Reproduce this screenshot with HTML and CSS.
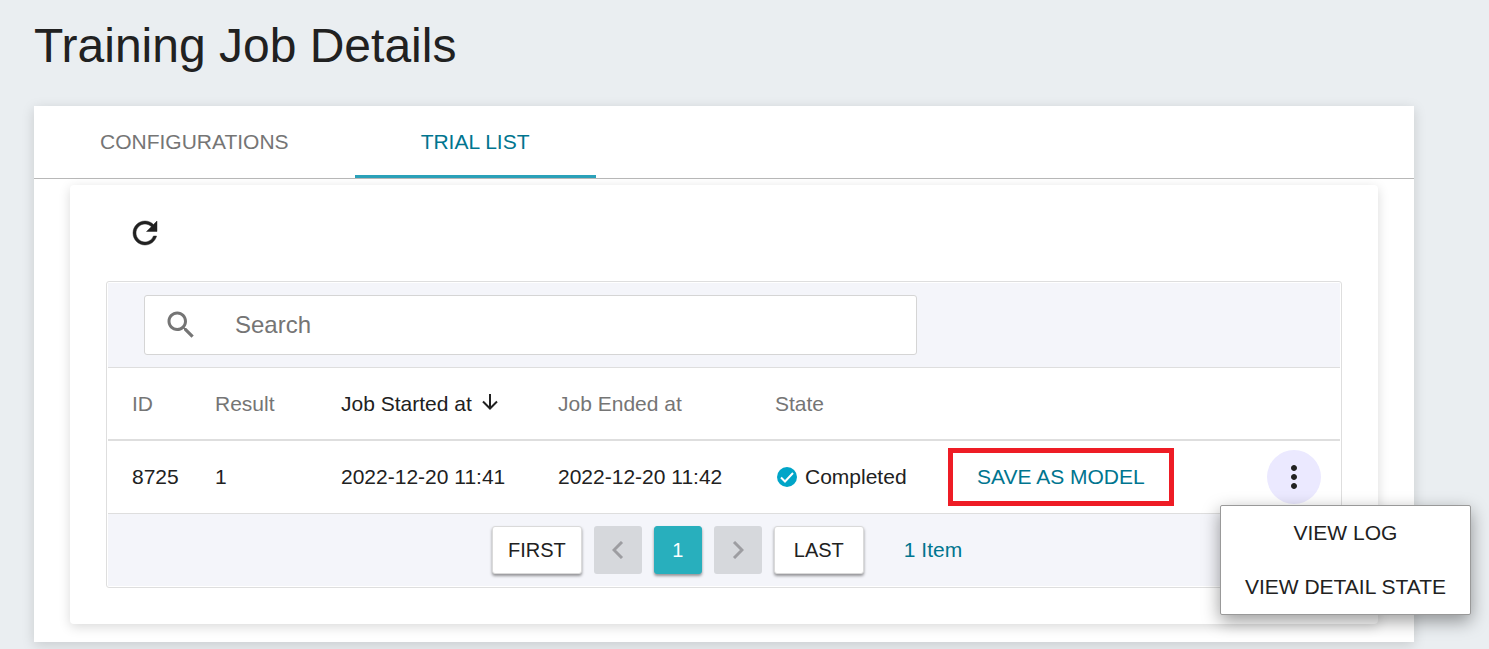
FILE: index.html
```
<!DOCTYPE html>
<html lang="en">
<head>
  <meta charset="UTF-8" />
  <meta name="viewport" content="width=device-width, initial-scale=1.0"/>
  <title>Training Job Details</title>
  <link rel="stylesheet" href="styles.css">
</head>
<body>
  <h1>Training Job Details</h1>

  <main class="card">
    <nav class="tabs" role="tablist">
      <button class="tab" role="tab" aria-selected="false">CONFIGURATIONS</button>
      <button class="tab active" role="tab" aria-selected="true">TRIAL LIST</button>
    </nav>

    <section class="panel">
      <button class="icon-btn refresh" aria-label="Refresh">
        <svg viewBox="0 0 24 24" width="36" height="36"><path d="M17.65 6.35C16.2 4.9 14.21 4 12 4c-4.42 0-7.99 3.58-7.99 8s3.57 8 7.99 8c3.73 0 6.84-2.55 7.73-6h-2.08c-.82 2.33-3.04 4-5.65 4-3.31 0-6-2.69-6-6s2.69-6 6-6c1.66 0 3.14.69 4.22 1.78L13 11h7V4l-2.35 2.35z"/></svg>
      </button>

      <div class="grid">
        <div class="toolbar">
          <div class="search">
            <label for="search" aria-label="Search">
              <svg viewBox="0 0 24 24" width="36" height="36"><path d="M15.5 14h-.79l-.28-.27C15.41 12.59 16 11.11 16 9.5 16 5.91 13.09 3 9.5 3S3 5.91 3 9.5 5.91 16 9.5 16c1.61 0 3.09-.59 4.23-1.57l.27.28v.79l5 4.99L20.49 19l-4.99-5zm-6 0C7.01 14 5 11.99 5 9.5S7.01 5 9.5 5 14 7.01 14 9.5 11.99 14 9.5 14z"/></svg>
            </label>
            <input type="text" id="search" placeholder="Search" />
          </div>
        </div>

        <table>
          <colgroup>
            <col class="col-id">
            <col class="col-result">
            <col class="col-date">
            <col class="col-date">
            <col class="col-state">
            <col>
            <col class="col-menu">
          </colgroup>
          <thead>
            <tr>
              <th>ID</th>
              <th>Result</th>
              <th class="sorted" aria-sort="descending">Job Started at
                <svg viewBox="0 0 16 18" width="16" height="18"><path d="M8 1v14M1 8.500l7 7 7-7"/></svg>
              </th>
              <th>Job Ended at</th>
              <th>State</th>
              <th></th>
              <th></th>
            </tr>
          </thead>
          <tbody>
            <tr>
              <td>8725</td>
              <td>1</td>
              <td>2022-12-20 11:41</td>
              <td>2022-12-20 11:42</td>
              <td>
                <span class="state">
                  <svg viewBox="0 0 20 20" width="20" height="20"><circle cx="10" cy="10" r="10"/><path d="M4 10.500l4 4 8-8.500"/></svg>
                  Completed
                </span>
              </td>
              <td><button class="save">SAVE AS MODEL</button></td>
              <td>
                <div class="menu-wrap">
                  <button class="icon-btn more" aria-label="More actions" aria-expanded="true">
                    <svg viewBox="0 0 24 24" width="36" height="36"><path d="M12 8c1.100 0 2-.9 2-2s-.9-2-2-2-2 .9-2 2 .9 2 2 2zm0 2c-1.100 0-2 .9-2 2s.9 2 2 2 2-.9 2-2-.9-2-2-2zm0 6c-1.100 0-2 .9-2 2s.9 2 2 2 2-.9 2-2-.9-2-2-2z"/></svg>
                  </button>
                  <div class="menu" role="menu">
                    <button role="menuitem">VIEW LOG</button>
                    <button role="menuitem">VIEW DETAIL STATE</button>
                  </div>
                </div>
              </td>
            </tr>
          </tbody>
        </table>

        <div class="pager">
          <button class="page wide">FIRST</button>
          <button class="page" disabled aria-label="Previous page">
            <svg viewBox="0 0 12 18" width="12" height="18"><path d="M10 1L2 9l8 8"/></svg>
          </button>
          <button class="page current" aria-current="page">1</button>
          <button class="page" disabled aria-label="Next page">
            <svg viewBox="0 0 12 18" width="12" height="18"><path d="M2 1l8 8-8 8"/></svg>
          </button>
          <button class="page wide">LAST</button>
          <span class="count">1 Item</span>
        </div>
      </div>
    </section>
  </main>
</body>
</html>
```
FILE: styles.css
```
:root {
  --primary: #00758f;
  --accent: #28afbd;
  --text: #212121;
  --muted: #757575;
  --line: #dedede;
  --stripe: #f4f5fa;
  --page-bg: #eaeef1;
}
* { box-sizing: border-box; margin: 0; padding: 0; }
body {
  font-family: "Liberation Sans", Arial, sans-serif;
  font-size: 21px;
  line-height: 24px;
  background: var(--page-bg);
  color: var(--text);
  padding: 18px 75px 7px 34px;
}
h1 {
  font-size: 48px;
  font-weight: 400;
  line-height: 56px;
  margin-bottom: 32px;
}
button, input {
  font: inherit;
  color: inherit;
  background: none;
  border: none;
}
button { cursor: pointer; }
svg { display: block; }
.card {
  background: #fff;
  padding-bottom: 18px;
  box-shadow: 0 3px 12px rgba(0,0,0,0.15);
}

/* tabs */
.tabs {
  display: flex;
  border-bottom: 1px solid #b8b8b8;
}
.tab {
  height: 72px;
  padding: 0 66px;
  color: var(--muted);
  border-bottom: 3px solid transparent;
  border-top: 3px solid transparent;
}
.tab.active {
  color: var(--primary);
  border-bottom-color: #2ba1b9;
}

.panel {
  margin: 6px 36px 0;
  padding: 21px 36px 36px;
  border-radius: 4px;
  background: #fff;
  box-shadow: 0 3px 12px rgba(0,0,0,0.15);
}
.icon-btn {
  display: flex;
  align-items: center;
  justify-content: center;
  width: 54px;
  height: 54px;
  border-radius: 50%;
}
.icon-btn svg { fill: var(--text); }
.refresh {
  margin: 0 0 21px 12px;
}
.refresh path {
  stroke: var(--text);
  stroke-width: 0.3;
}

/* trial table */
.grid {
  border: 1px solid var(--line);
  border-radius: 3px;
  padding: 1px;
}
.toolbar {
  background: var(--stripe);
  border-bottom: 1px solid var(--line);
  padding: 12px 36px;
}
.search {
  display: flex;
  align-items: center;
  width: calc(100% * 2 / 3);
  height: 60px;
  background: #fff;
  border: 1px solid #d5d5d5;
  border-radius: 3px;
}
.search label {
  margin: 0 36px 0 18px;
}
.search svg { fill: var(--muted); }
.search input {
  flex: 1;
  min-width: 0;
  font-size: 24px;
  outline: none;
}
.search input::placeholder {
  color: var(--muted);
  opacity: 1;
}
table {
  width: 100%;
  table-layout: fixed;
  border-spacing: 0;
}
th, td {
  height: 73px;
  padding-left: 24px;
  text-align: left;
  font-weight: 400;
  white-space: nowrap;
  border-bottom: 1px solid var(--line);
}
th {
  color: var(--muted);
  border-bottom-width: 2px;
}
th.sorted { color: var(--text); }
th svg {
  display: inline-block;
  margin-left: 4px;
  fill: none;
  stroke: var(--text);
  stroke-width: 2;
}
.col-id { width: 83px; }
.col-result { width: 126px; }
.col-date { width: 217px; }
.col-state { width: 173px; }
.col-menu { width: 97px; }
.state {
  display: flex;
  align-items: center;
  gap: 8px;
  padding-left: 2px;
}
.state circle { fill: #00a5c8; }
.state path {
  fill: none;
  stroke: #fff;
  stroke-width: 2;
}
.save {
  height: 58px;
  padding: 0 24px;
  color: var(--primary);
  border: 5px solid #ee1c25;
}

/* row menu */
.menu-wrap {
  position: relative;
  width: 54px;
}
.more { background: #ebe9ff; }
.menu {
  position: absolute;
  z-index: 1;
  top: 55px;
  right: -150px;
  background: #fff;
  border: 1px solid #999;
  border-radius: 2px;
  box-shadow: 0 6px 18px rgba(0,0,0,0.4);
}
.menu button {
  display: block;
  width: 100%;
  height: 54px;
  padding: 0 24px;
}

/* pagination */
.pager {
  display: flex;
  align-items: center;
  justify-content: center;
  gap: 12px;
  padding: 12px 18px 12px 24px;
  background: var(--stripe);
}
.page {
  display: flex;
  align-items: center;
  justify-content: center;
  width: 48px;
  height: 48px;
  font-size: 20px;
  border-radius: 3px;
}
.page.wide { width: 90px; }
.page.wide, .page.current {
  background: #fff;
  border: 1px solid #dadada;
  box-shadow: 0 2px 3px rgba(0,0,0,0.4);
}
.page.current {
  background: var(--accent);
  border-color: var(--accent);
  color: #fff;
}
.page:disabled {
  background: #d6d8dc;
  cursor: default;
}
.page svg {
  fill: none;
  stroke: #9d9da1;
  stroke-width: 3;
}
.count {
  margin-left: 28px;
  color: var(--primary);
}
```
